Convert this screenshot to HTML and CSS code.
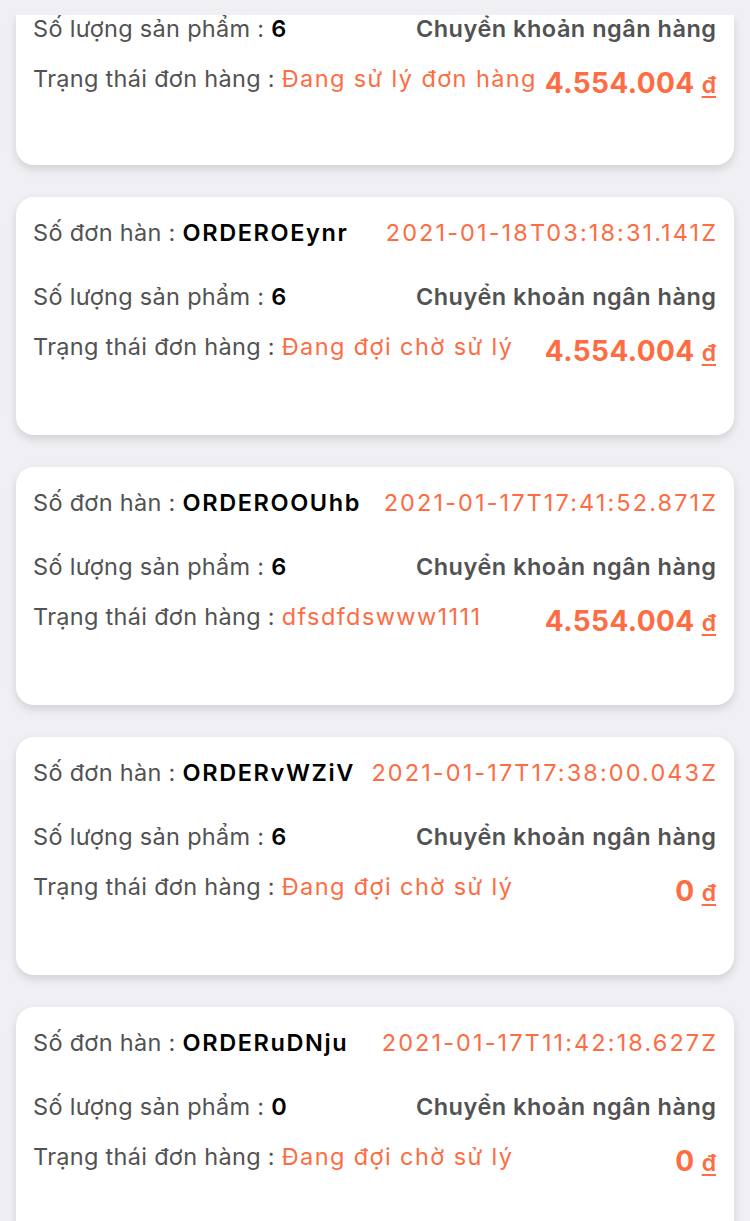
FILE: index.html
```html
<!DOCTYPE html>
<html lang="vi">
<head>
<meta charset="utf-8">
<title>Đơn hàng</title>
<link rel="stylesheet" href="styles.css">
</head>
<body>
<div class="screen">
  <div class="topbar"></div>
  <div class="list">
    <div class="card first">
      <div class="row r2"><div class="left"><span class="label">Số lượng sản phẩm : </span><span class="val">6</span></div><div class="pay">Chuyển khoản ngân hàng</div></div>
      <div class="row r3"><div class="left"><span class="label">Trạng thái đơn hàng : </span><span class="status">Đang sử lý đơn hàng</span></div><div class="amount">4.554.004 <span class="cur">đ</span></div></div>
    </div>
    <div class="card">
      <div class="row r1"><div class="left"><span class="label">Số đơn hàn : </span><span class="val">ORDEROEynr</span></div><div class="date">2021-01-18T03:18:31.141Z</div></div>
      <div class="row r2"><div class="left"><span class="label">Số lượng sản phẩm : </span><span class="val">6</span></div><div class="pay">Chuyển khoản ngân hàng</div></div>
      <div class="row r3"><div class="left"><span class="label">Trạng thái đơn hàng : </span><span class="status">Đang đợi chờ sử lý</span></div><div class="amount">4.554.004 <span class="cur">đ</span></div></div>
    </div>
    <div class="card">
      <div class="row r1"><div class="left"><span class="label">Số đơn hàn : </span><span class="val">ORDEROOUhb</span></div><div class="date">2021-01-17T17:41:52.871Z</div></div>
      <div class="row r2"><div class="left"><span class="label">Số lượng sản phẩm : </span><span class="val">6</span></div><div class="pay">Chuyển khoản ngân hàng</div></div>
      <div class="row r3"><div class="left"><span class="label">Trạng thái đơn hàng : </span><span class="status">dfsdfdswww1111</span></div><div class="amount">4.554.004 <span class="cur">đ</span></div></div>
    </div>
    <div class="card">
      <div class="row r1"><div class="left"><span class="label">Số đơn hàn : </span><span class="val">ORDERvWZiV</span></div><div class="date">2021-01-17T17:38:00.043Z</div></div>
      <div class="row r2"><div class="left"><span class="label">Số lượng sản phẩm : </span><span class="val">6</span></div><div class="pay">Chuyển khoản ngân hàng</div></div>
      <div class="row r3"><div class="left"><span class="label">Trạng thái đơn hàng : </span><span class="status">Đang đợi chờ sử lý</span></div><div class="amount">0 <span class="cur">đ</span></div></div>
    </div>
    <div class="card">
      <div class="row r1"><div class="left"><span class="label">Số đơn hàn : </span><span class="val">ORDERuDNju</span></div><div class="date">2021-01-17T11:42:18.627Z</div></div>
      <div class="row r2"><div class="left"><span class="label">Số lượng sản phẩm : </span><span class="val">0</span></div><div class="pay">Chuyển khoản ngân hàng</div></div>
      <div class="row r3"><div class="left"><span class="label">Trạng thái đơn hàng : </span><span class="status">Đang đợi chờ sử lý</span></div><div class="amount">0 <span class="cur">đ</span></div></div>
    </div>
  </div>
</div>
</body>
</html>
```

FILE: styles.css
```css
* { box-sizing: border-box; }
html, body { margin: 0; padding: 0; }
body {
  background: #efeff4;
  font-family: Inter, "Noto Sans", "Liberation Sans", sans-serif;
  -webkit-font-smoothing: antialiased;
}
.screen {
  width: 750px;
  height: 1221px;
  display: flex;
  flex-direction: column;
  overflow: hidden;
}
.topbar {
  height: 15px;
  flex: none;
  background: #efeff4;
}
.list {
  flex: 1;
  overflow: hidden;
  padding: 0 16px;
  display: flex;
  flex-direction: column;
  gap: 32px;
}
.card {
  flex: none;
  height: 238px;
  background: #fff;
  border-radius: 18px;
  box-shadow: 0 4px 10px rgba(0, 0, 0, 0.13);
  padding: 22px 18px 0 17px;
  display: flex;
  flex-direction: column;
}
.card.first {
  height: 150px;
  padding-top: 0;
  border-top-left-radius: 0;
  border-top-right-radius: 0;
}
.card.first .r2 { margin-top: 0; }
.row {
  display: flex;
  justify-content: space-between;
  align-items: flex-start;
  line-height: 28px;
  white-space: nowrap;
}
.r2 { margin-top: 34px; }
.r3 { margin-top: 20px; }
.label {
  color: #525252;
  font-size: 23.5px;
  letter-spacing: 0.3px;
}
.val {
  color: #000;
  font-size: 23.5px;
  font-weight: 600;
  letter-spacing: 1.6px;
}
.date {
  color: #fd6c42;
  font-size: 23.5px;
  letter-spacing: 2.1px;
  margin-right: -2.1px;
}
.pay {
  color: #525252;
  font-size: 23.5px;
  font-weight: 600;
  letter-spacing: 0.5px;
  margin-right: -0.5px;
}
.status {
  color: #fd6c42;
  font-size: 23.5px;
  letter-spacing: 1.4px;
}
.amount {
  color: #fd6c42;
  font-size: 28px;
  font-weight: 700;
  padding-top: 4px;
  letter-spacing: 0.4px;
}
.cur {
  font-size: 23px;
  font-weight: 600;
  letter-spacing: 0;
  text-decoration: underline;
  text-decoration-thickness: 2px;
  text-underline-offset: 3px;
}
```
